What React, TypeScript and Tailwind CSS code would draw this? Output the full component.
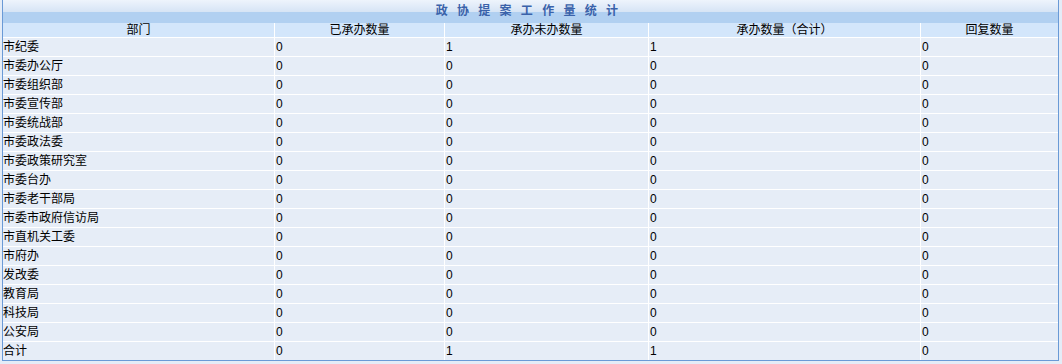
import React from "react";

const rows: [string, string, string, string, string][] = [
  ["市纪委", "0", "1", "1", "0"],
  ["市委办公厅", "0", "0", "0", "0"],
  ["市委组织部", "0", "0", "0", "0"],
  ["市委宣传部", "0", "0", "0", "0"],
  ["市委统战部", "0", "0", "0", "0"],
  ["市委政法委", "0", "0", "0", "0"],
  ["市委政策研究室", "0", "0", "0", "0"],
  ["市委台办", "0", "0", "0", "0"],
  ["市委老干部局", "0", "0", "0", "0"],
  ["市委市政府信访局", "0", "0", "0", "0"],
  ["市直机关工委", "0", "0", "0", "0"],
  ["市府办", "0", "0", "0", "0"],
  ["发改委", "0", "0", "0", "0"],
  ["教育局", "0", "0", "0", "0"],
  ["科技局", "0", "0", "0", "0"],
  ["公安局", "0", "0", "0", "0"],
  ["合计", "0", "1", "1", "0"],
];

const headers = ["部门", "已承办数量", "承办未办数量", "承办数量（合计）", "回复数量"];

export default function App() {
  return (
    <div
      className="w-[1062px] h-[364px] bg-[#e4ecf7] overflow-hidden"
      style={{ fontFamily: '"Liberation Sans", "Noto Sans CJK SC", sans-serif' }}
    >
      <div className="ml-[2px] w-[1057px] border-x border-b border-[#6a9ad6] bg-white flex flex-col">
        <div className="h-[23px] flex items-center justify-center bg-[linear-gradient(to_bottom,#eef4fc_0px,#d6e4f5_12px,#b1d0f1_12px,#b1d0f1_100%)]">
          <span className="text-[12px] leading-[14px] font-bold text-[#3a62aa] tracking-[9.3px] -mr-[2px] -mt-[1px]">
            政协提案工作量统计
          </span>
        </div>
        <div className="grid grid-cols-[271px_169px_203px_271px_1fr] gap-px bg-white">
          {headers.map((h) => (
            <div
              key={h}
              className="h-[14px] bg-[#d3e6fb] text-center text-[12px] leading-[14px] text-black"
            >
              {h}
            </div>
          ))}
          {rows.map((r) =>
            r.map((c, i) => (
              <div
                key={r[0] + i}
                className={`h-[18px] bg-[#e6edf7] text-[12px] leading-[19px] text-black ${i === 0 ? "pl-0" : "pl-px"}`}
              >
                {c}
              </div>
            ))
          )}
        </div>
      </div>
    </div>
  );
}
